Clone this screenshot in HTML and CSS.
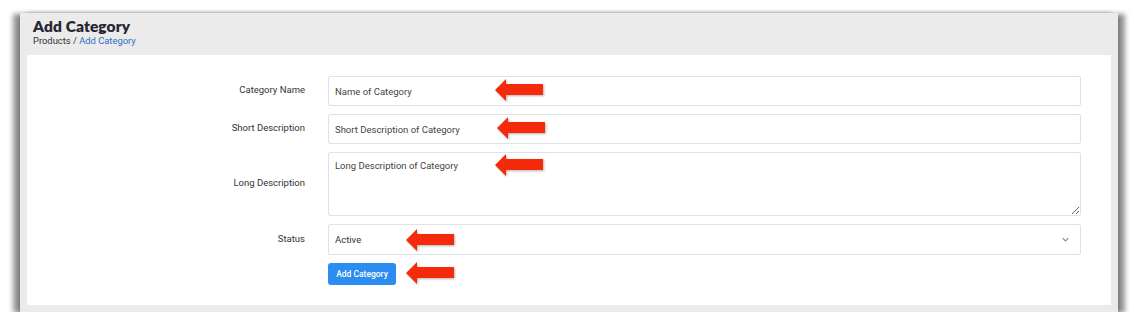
FILE: index.html
```html
<!DOCTYPE html>
<html lang="en">
<head>
  <meta charset="UTF-8" />
  <title>Add Category</title>
  <link rel="stylesheet" href="styles.css">
</head>
<body>
  <div class="frame">
    <div class="page-head">
      <h1>Add Category</h1>
      <div class="crumbs">Products / <a href="#">Add Category</a></div>
    </div>

    <div class="card">
      <form class="form">
        <label class="lbl">Category Name</label>
        <div class="field">
          <input class="ctl" type="text" value="Name of Category">
          <svg class="arrow a1" viewBox="0 0 48 22"><polygon points="0,11 11,0 11,5 48,5 48,16 11,16 11,22"/></svg>
        </div>

        <label class="lbl">Short Description</label>
        <div class="field">
          <input class="ctl" type="text" value="Short Description of Category">
          <svg class="arrow a2" viewBox="0 0 48 22"><polygon points="0,11 11,0 11,5 48,5 48,16 11,16 11,22"/></svg>
        </div>

        <label class="lbl">Long Description</label>
        <div class="field">
          <textarea class="ctl area">Long Description of Category</textarea>
          <svg class="arrow a3" viewBox="0 0 48 22"><polygon points="0,11 11,0 11,5 48,5 48,16 11,16 11,22"/></svg>
        </div>

        <label class="lbl">Status</label>
        <div class="field">
          <select class="ctl sel">
            <option>Active</option>
            <option>Inactive</option>
          </select>
          <svg class="chev" viewBox="0 0 10 6"><polyline points="1,1 5,5 9,1"/></svg>
          <svg class="arrow a4" viewBox="0 0 48 22"><polygon points="0,11 11,0 11,5 48,5 48,16 11,16 11,22"/></svg>
        </div>

        <span></span>
        <div class="field">
          <button type="button" class="btn">Add Category</button>
          <svg class="arrow a5" viewBox="0 0 48 22"><polygon points="0,11 11,0 11,5 48,5 48,16 11,16 11,22"/></svg>
        </div>
      </form>
    </div>
  </div>
</body>
</html>
```

FILE: styles.css
```css
body { margin: 0; background: #fff; font-family: Roboto, "Liberation Sans", sans-serif; color: #333; }

.frame {
  margin: 13px 27px 0 20px;
  height: 299px;
  box-sizing: border-box;
  background: #ebebeb;
  padding: 0 7px 7px 7px;
  display: flex;
  flex-direction: column;
  box-shadow: -7px 1px 5px rgba(0,0,0,0.42), 7px 1px 5px rgba(0,0,0,0.42), 0 3px 4px rgba(0,0,0,0.35);
}

.page-head { padding: 4px 6px 8px; }
.page-head h1 { margin: 0; font-family: Lato, sans-serif; font-weight: 800; font-size: 15.5px; line-height: 18px; color: #262733; letter-spacing: 0.1px; }
.crumbs { font-size: 9.4px; line-height: 12px; color: #333; }
.crumbs a { color: #2f6ec2; text-decoration: none; }

.card { flex: 1; background: #fff; padding: 21px 30px 0 0; }

.form { display: grid; grid-template-columns: 278px 1fr; column-gap: 23px; row-gap: 8px; }
.lbl { font-size: 9.5px; color: #333; text-align: right; align-self: center; padding-bottom: 3px; }

.field { position: relative; }
.ctl {
  display: block;
  width: 100%;
  box-sizing: border-box;
  height: 30px;
  margin: 0;
  padding: 0 6px;
  border: 1px solid #dde2e5;
  border-radius: 2px;
  background: #fff;
  font-family: Roboto, "Liberation Sans", sans-serif;
  font-size: 9.5px;
  color: #444;
  outline: none;
}
.area { height: 64px; padding-top: 7px; resize: vertical; }
.sel { appearance: none; -webkit-appearance: none; height: 31px; color: #333; }
.chev { position: absolute; right: 12px; top: 13px; width: 7px; height: 5px; fill: none; stroke: #7b8a99; stroke-width: 1.5; }

.btn {
  display: block;
  width: 68px;
  height: 22px;
  padding: 0;
  border: none;
  border-radius: 3px;
  background: #2d8cf0;
  color: #fff;
  font-family: Roboto, "Liberation Sans", sans-serif;
  font-size: 8.5px;
  font-weight: 500;
}

.arrow { position: absolute; width: 48px; height: 22px; fill: #f42a0b; filter: drop-shadow(1px 1px 1px rgba(0,0,0,0.3)); }
.a1 { left: 167px; top: 3px; }
.a2 { left: 169px; top: 3px; }
.a3 { left: 167px; top: 2px; }
.a4 { left: 78px; top: 5px; }
.a5 { left: 78px; top: -1px; }
```
